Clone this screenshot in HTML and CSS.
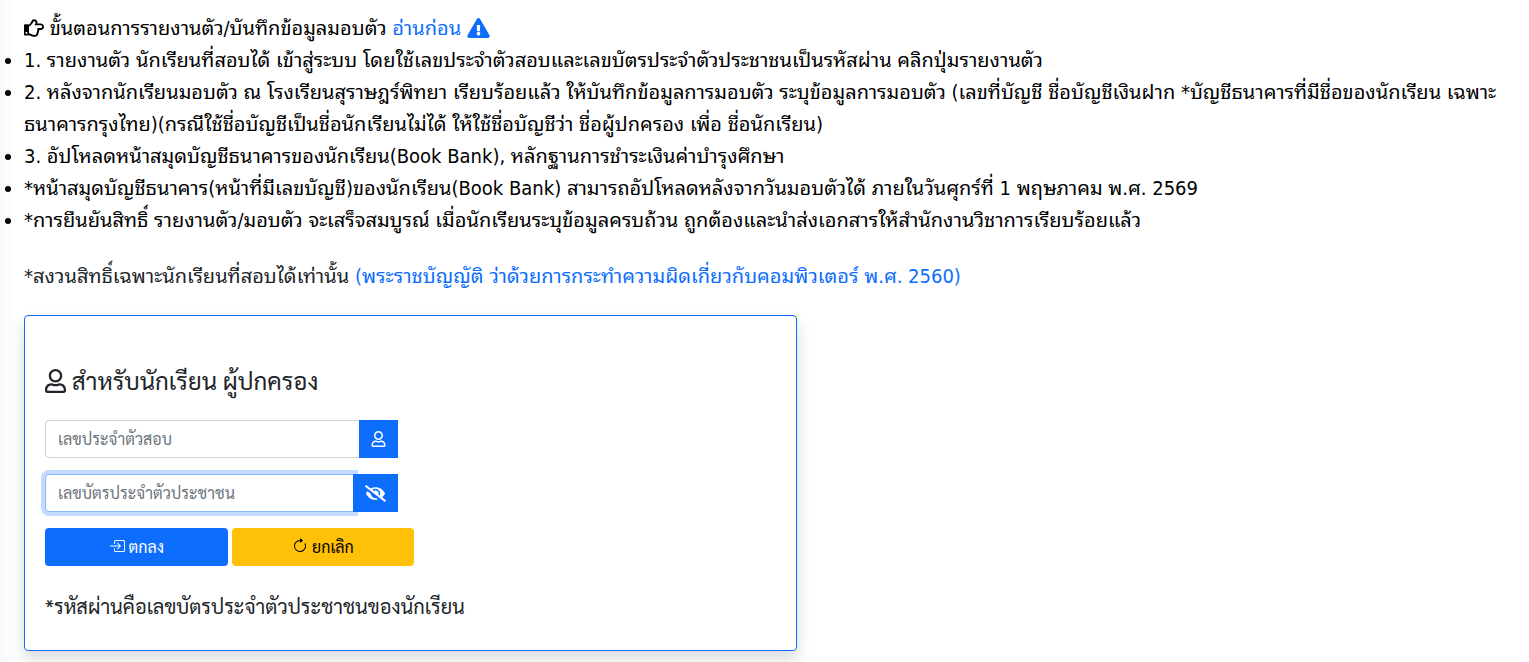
FILE: index.html
```html
<!DOCTYPE html>
<html lang="th">
<head>
  <meta charset="UTF-8">
  <meta name="viewport" content="width=device-width, initial-scale=1.0">
  <title>รายงานตัว/มอบตัว</title>
  <link rel="stylesheet" href="styles.css">
</head>
<body>
  <main class="content">
    <div class="steps">
      <p class="steps-title">
        <svg class="icon-hand" viewBox="0 0 512 512"><path d="M428.8 137.6h-86.177a115.52 115.52 0 0 0 2.176-22.4c0-47.914-35.072-83.2-92-83.2-45.314 0-57.002 48.537-75.707 78.784-7.735 12.413-16.994 23.317-25.851 33.253l-.131.146-.129.148C135.662 161.807 127.764 168 120.8 168h-2.679c-5.747-4.952-13.536-8-22.12-8H32c-17.673 0-32 12.894-32 28.8v230.4C0 435.106 14.327 448 32 448h64c8.584 0 16.373-3.048 22.12-8h2.679c28.688 0 67.137 40 127.2 40h21.299c62.542 0 98.8-38.658 99.94-91.145 12.482-17.813 18.491-40.785 15.985-62.791A93.148 93.148 0 0 0 393.152 304H428.8c45.435 0 83.2-37.584 83.2-83.2 0-45.099-38.101-83.2-83.2-83.2zm0 118.4h-91.026c12.837 14.669 14.415 42.825-4.95 61.05 11.227 19.646 1.687 45.624-12.925 53.625 6.524 39.28-10.076 61.325-50.6 61.325H248c-45.491 0-77.21-35.913-120-39.676V215.571c25.239-2.964 42.966-21.222 59.075-39.596 11.275-12.65 21.725-25.3 30.799-39.875C232.355 112.712 244.006 80 252.8 80c23.375 0 44 8.8 44 35.2 0 35.2-26.4 53.075-26.4 70.4h158.4c18.425 0 35.2 16.5 35.2 35.2 0 18.975-16.225 35.2-35.2 35.2zM88 384c0 13.255-10.745 24-24 24s-24-10.745-24-24 10.745-24 24-24 24 10.745 24 24z"/></svg>
        ขั้นตอนการรายงานตัว/บันทึกข้อมูลมอบตัว
        <a href="#">อ่านก่อน <svg class="icon-warning" viewBox="0 0 576 512"><path d="M569.517 440.013C587.975 472.007 564.806 512 527.94 512H48.054c-36.937 0-59.999-40.055-41.577-71.987L246.423 23.985c18.467-32.009 64.72-31.951 83.154 0l239.94 416.028zM288 354c-25.405 0-46 20.595-46 46s20.595 46 46 46 46-20.595 46-46-20.595-46-46-46zm-43.673-165.346l7.418 136c.347 6.364 5.609 11.346 11.982 11.346h48.546c6.373 0 11.635-4.982 11.982-11.346l7.418-136c.375-6.874-5.098-12.654-11.982-12.654h-63.383c-6.884 0-12.356 5.78-11.981 12.654z"/></svg></a>
      </p>
      <ul>
        <li>1. รายงานตัว นักเรียนที่สอบได้ เข้าสู่ระบบ โดยใช้เลขประจำตัวสอบและเลขบัตรประจำตัวประชาชนเป็นรหัสผ่าน คลิกปุ่มรายงานตัว</li>
        <li>2. หลังจากนักเรียนมอบตัว ณ โรงเรียนสุราษฎร์พิทยา เรียบร้อยแล้ว ให้บันทึกข้อมูลการมอบตัว ระบุข้อมูลการมอบตัว (เลขที่บัญชี ชื่อบัญชีเงินฝาก *บัญชีธนาคารที่มีชื่อของนักเรียน เฉพาะธนาคารกรุงไทย)(กรณีใช้ชื่อบัญชีเป็นชื่อนักเรียนไม่ได้ ให้ใช้ชื่อบัญชีว่า ชื่อผู้ปกครอง เพื่อ ชื่อนักเรียน)</li>
        <li>3. อัปโหลดหน้าสมุดบัญชีธนาคารของนักเรียน(Book Bank), หลักฐานการชำระเงินค่าบำรุงศึกษา</li>
        <li>*หน้าสมุดบัญชีธนาคาร(หน้าที่มีเลขบัญชี)ของนักเรียน(Book Bank) สามารถอัปโหลดหลังจากวันมอบตัวได้ ภายในวันศุกร์ที่ 1 พฤษภาคม พ.ศ. 2569</li>
        <li>*การยืนยันสิทธิ์ รายงานตัว/มอบตัว จะเสร็จสมบูรณ์ เมื่อนักเรียนระบุข้อมูลครบถ้วน ถูกต้องและนำส่งเอกสารให้สำนักงานวิชาการเรียบร้อยแล้ว</li>
      </ul>
    </div>
    <p class="notice">*สงวนสิทธิ์เฉพาะนักเรียนที่สอบได้เท่านั้น <a href="#">(พระราชบัญญัติ ว่าด้วยการกระทำความผิดเกี่ยวกับคอมพิวเตอร์ พ.ศ. 2560)</a></p>

    <section class="card">
      <h2>
        <svg class="icon-user" viewBox="0 0 448 512"><path d="M313.6 304c-28.7 0-42.5 16-89.6 16-47.1 0-60.8-16-89.6-16C60.2 304 0 364.2 0 438.4V464c0 26.5 21.5 48 48 48h352c26.5 0 48-21.5 48-48v-25.6c0-74.2-60.2-134.4-134.4-134.4zM400 464H48v-25.6c0-47.6 38.8-86.4 86.4-86.4 14.6 0 38.3 16 89.6 16 51.7 0 74.9-16 89.6-16 47.6 0 86.4 38.8 86.4 86.4V464zM224 288c79.5 0 144-64.5 144-144S303.5 0 224 0 80 64.5 80 144s64.5 144 144 144zm0-240c52.9 0 96 43.1 96 96s-43.1 96-96 96-96-43.1-96-96 43.1-96 96-96z"/></svg>
        สำหรับนักเรียน ผู้ปกครอง
      </h2>
      <form class="login">
        <div class="input-group">
          <input type="text" id="examId" placeholder="เลขประจำตัวสอบ" aria-label="เลขประจำตัวสอบ">
          <label class="addon" for="examId">
            <svg class="icon-user" viewBox="0 0 448 512"><path d="M313.6 304c-28.7 0-42.5 16-89.6 16-47.1 0-60.8-16-89.6-16C60.2 304 0 364.2 0 438.4V464c0 26.5 21.5 48 48 48h352c26.5 0 48-21.5 48-48v-25.6c0-74.2-60.2-134.4-134.4-134.4zM400 464H48v-25.6c0-47.6 38.8-86.4 86.4-86.4 14.6 0 38.3 16 89.6 16 51.7 0 74.9-16 89.6-16 47.6 0 86.4 38.8 86.4 86.4V464zM224 288c79.5 0 144-64.5 144-144S303.5 0 224 0 80 64.5 80 144s64.5 144 144 144zm0-240c52.9 0 96 43.1 96 96s-43.1 96-96 96-96-43.1-96-96 43.1-96 96-96z"/></svg>
          </label>
        </div>
        <div class="input-group">
          <input type="password" id="citizenId" placeholder="เลขบัตรประจำตัวประชาชน" aria-label="เลขบัตรประจำตัวประชาชน" autofocus>
          <button type="button" class="addon" id="toggle" aria-label="แสดงรหัสผ่าน">
            <svg class="icon-eye" viewBox="0 0 640 512"><path d="M320 400c-75.85 0-137.25-58.71-142.9-133.11L72.2 185.82c-13.79 17.3-26.48 35.59-36.72 55.59a32.35 32.35 0 0 0 0 29.19C89.71 376.41 197.07 448 320 448c26.91 0 52.87-4 77.89-10.46L346 397.39a144.13 144.13 0 0 1-26 2.61zm313.82 58.1l-110.55-85.44a331.25 331.25 0 0 0 81.25-102.07 32.35 32.35 0 0 0 0-29.19C550.29 135.59 442.93 64 320 64a308.15 308.15 0 0 0-147.32 37.7L45.46 3.37A16 16 0 0 0 23 6.18L3.37 31.45A16 16 0 0 0 6.18 53.9l588.36 454.73a16 16 0 0 0 22.46-2.81l19.64-25.27a16 16 0 0 0-2.82-22.45zm-183.72-142l-39.3-30.38A94.75 94.75 0 0 0 416 256a94.76 94.76 0 0 0-121.31-92.21A47.65 47.65 0 0 1 304 192a46.64 46.64 0 0 1-1.54 10l-73.61-56.89A142.31 142.31 0 0 1 320 112a143.92 143.92 0 0 1 144 144c0 21.63-5.29 41.79-13.9 60.11z"/></svg>
          </button>
        </div>
        <div class="buttons">
          <button type="submit" class="btn btn-primary">
            <svg viewBox="0 0 16 16"><path d="M6 3.5a.5.5 0 0 1 .5-.5h8a.5.5 0 0 1 .5.5v9a.5.5 0 0 1-.5.5h-8a.5.5 0 0 1-.5-.5v-2a.5.5 0 0 0-1 0v2A1.5 1.5 0 0 0 6.5 14h8a1.5 1.5 0 0 0 1.5-1.5v-9A1.5 1.5 0 0 0 14.5 2h-8A1.5 1.5 0 0 0 5 3.5v2a.5.5 0 0 0 1 0v-2z"/><path d="M11.854 8.354a.5.5 0 0 0 0-.708l-3-3a.5.5 0 1 0-.708.708L10.293 7.5H1.5a.5.5 0 0 0 0 1h8.793l-2.147 2.146a.5.5 0 0 0 .708.708l3-3z"/></svg>
            ตกลง
          </button>
          <button type="reset" class="btn btn-warning">
            <svg viewBox="0 0 16 16"><path d="M8 3a5 5 0 1 0 4.546 2.914.5.5 0 0 1 .908-.417A6 6 0 1 1 8 2v1z"/><path d="M8 4.466V.534a.25.25 0 0 1 .41-.192l2.36 1.966c.12.1.12.284 0 .384L8.41 4.658A.25.25 0 0 1 8 4.466z"/></svg>
            ยกเลิก
          </button>
        </div>
      </form>
      <p class="hint">*รหัสผ่านคือเลขบัตรประจำตัวประชาชนของนักเรียน</p>
    </section>
  </main>
  <script>
    document.getElementById('toggle').addEventListener('click', () => {
      const input = document.getElementById('citizenId')
      input.type = input.type === 'password' ? 'text' : 'password'
    })
  </script>
</body>
</html>
```

FILE: styles.css
```css
* {
  box-sizing: border-box;
}
body {
  margin: 0;
  background: linear-gradient(to right, #f8f9fa, #fff 16px);
  color: #212529;
  font-family: Tahoma, "DejaVu Sans Condensed", Waree, "Noto Sans Thai Looped", sans-serif;
  font-size: 20px;
  line-height: 32px;
}
.content {
  padding: 12px 8px 12px 24px;
}
p, ul, h2 {
  margin: 0;
}
ul {
  padding: 0;
}
a {
  color: #0d6efd;
  text-decoration: none;
}
svg {
  fill: currentColor;
}
.steps {
  color: #000;
}
.icon-hand {
  width: 20px;
  height: 20px;
  vertical-align: -3px;
}
.icon-warning {
  width: 23px;
  height: 20px;
  vertical-align: -3px;
}
.notice {
  margin-top: 24px;
}
.card {
  width: calc(50% + 24px);
  margin-top: 23px;
  padding: 48px 20px 28px;
  border: 1px solid #0d6efd;
  border-radius: 4px;
  background: #fff;
  box-shadow: 0 8px 16px rgba(0, 0, 0, 0.15);
  font-family: Sarabun, "Noto Sans", sans-serif;
}
.card h2 {
  font-size: 24px;
  font-weight: 400;
}
h2 .icon-user {
  width: 21px;
  height: 24px;
  vertical-align: -3px;
}
.login {
  display: flex;
  flex-direction: column;
  gap: 16px;
  width: calc(50% + 4px);
  margin-top: 24px;
}
.input-group {
  display: flex;
  margin-right: 16px;
}
.input-group input {
  flex: 1;
  min-width: 0;
  height: 38px;
  padding: 5px 12px 7px;
  border: 1px solid #ced4da;
  border-radius: 4px 0 0 4px;
  outline: none;
  font-family: inherit;
  font-size: 16px;
  color: #212529;
}
.input-group input:focus {
  border-color: #86b7fe;
  box-shadow: 0 0 0 4px rgba(13, 110, 253, 0.25);
}
.input-group input::placeholder {
  color: #6c757d;
}
.addon {
  position: relative;
  display: flex;
  align-items: center;
  margin-left: -1px;
  padding: 0 12px;
  border: 0;
  background: #0d6efd;
  color: #fff;
}
.addon .icon-user {
  width: 15px;
  height: 16px;
}
.addon .icon-eye {
  width: 21px;
  height: 17px;
}
.buttons {
  display: flex;
  gap: 4px;
}
.btn {
  display: flex;
  flex: 1;
  align-items: center;
  justify-content: center;
  gap: 4px;
  height: 38px;
  padding: 5px 12px 7px;
  border: 0;
  border-radius: 4px;
  font-family: inherit;
  font-size: 16px;
}
.btn svg {
  width: 16px;
  height: 16px;
}
.btn-primary {
  background: #0d6efd;
  color: #fff;
}
.btn-warning {
  background: #ffc107;
  color: #000;
}
.hint {
  margin-top: 24px;
}
```
